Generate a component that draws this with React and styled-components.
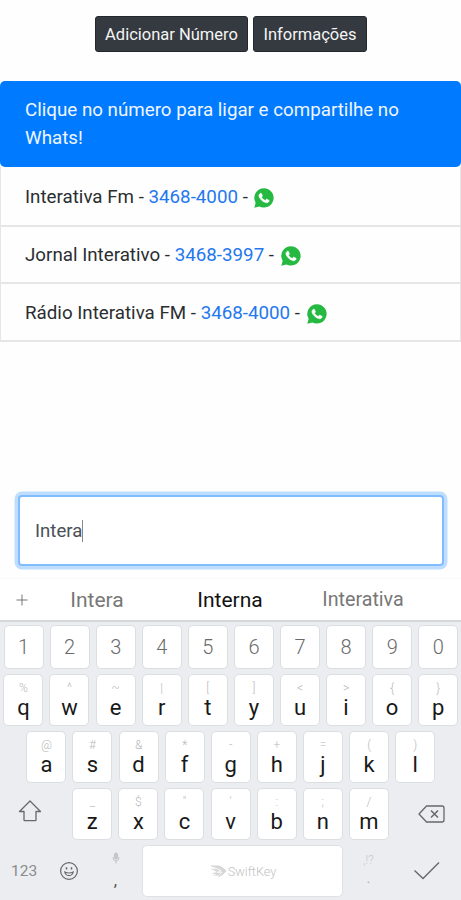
import React from "react";
import styled, { createGlobalStyle } from "styled-components";

const GlobalStyle = createGlobalStyle`
  * {
    box-sizing: border-box;
  }
  body {
    margin: 0;
    background: #ffffff;
    font-family: Roboto, "Liberation Sans", sans-serif;
  }
`;

const Screen = styled.div`
  width: 461px;
  height: 900px;
  display: flex;
  flex-direction: column;
  overflow: hidden;
  background: #fefefe;
`;

const Toolbar = styled.div`
  display: flex;
  justify-content: center;
  gap: 5px;
  height: 81px;
  padding-top: 16px;
`;

const DarkButton = styled.button`
  width: ${(props) => props.$width}px;
  height: 36px;
  padding: 0 0 0 1px;
  border: 1px solid #23282e;
  border-radius: 3px;
  background: #343a40;
  color: #f4f4f4;
  font-family: inherit;
  font-size: 16.5px;
  white-space: nowrap;
`;

const ListHeader = styled.div`
  height: 86px;
  padding: 15px 25px;
  border-radius: 5px;
  background: #007bff;
  color: #f0f5ff;
  font-size: 18.75px;
  line-height: 28px;
`;

const ContactList = styled.ul`
  height: 328px;
  margin: 0;
  padding: 0;
  list-style: none;
`;

const Contact = styled.li`
  display: flex;
  align-items: center;
  height: ${(props) => props.$height}px;
  padding: 1px 0 0 24px;
  border: solid #e6e6e6;
  border-width: 0 1px 2px;
  color: #2b2e31;
  font-size: 18.75px;
  white-space: pre;
`;

const Phone = styled.a`
  color: #2478ee;
`;

const SearchBox = styled.div`
  display: flex;
  align-items: center;
  flex-shrink: 0;
  height: 71px;
  margin: 0 17px 0 18px;
  padding-left: 15px;
  border: 2px solid #80bdff;
  border-radius: 4px;
  box-shadow: 0 0 0 3.5px #bfdeff;
  background: #ffffff;
  color: #495057;
  font-size: 18.6px;
`;

const Caret = styled.span`
  width: 1px;
  height: 22px;
  background: #888888;
`;

const Suggestions = styled.div`
  display: grid;
  grid-template-columns: 31px 132px 134px 132px 32px;
  align-items: center;
  flex-shrink: 0;
  height: 44px;
  margin-top: 12px;
  border-top: 1px solid #f8f8f8;
  border-bottom: 2px solid #d6d8da;
  background: #ffffff;
`;

const Suggestion = styled.span`
  text-align: center;
  color: ${(props) => (props.$active ? "#111111" : "#777777")};
  font-size: ${(props) => props.$size}px;
`;

const PlusIcon = styled.svg`
  margin-left: 16px;
`;

const Keyboard = styled.div`
  flex: 1;
  display: flex;
  flex-direction: column;
  gap: 5px;
  padding-top: 3px;
  background: #ebedf0;
`;

const KeyRow = styled.div`
  display: flex;
  gap: 6.1px;
  height: ${(props) => props.$height || 52}px;
  padding-left: ${(props) => props.$indent}px;
`;

const KeyCap = styled.div`
  display: flex;
  flex-direction: column;
  align-items: center;
  justify-content: ${(props) => (props.$plain ? "center" : "flex-start")};
  width: 40px;
  border: 1px solid #dcdfe2;
  border-radius: 5px;
  background: #ffffff;
  color: ${(props) => (props.$plain ? "#6a6a6a" : "#191919")};
  font-size: ${(props) => (props.$plain ? 20 : 22)}px;
  font-weight: ${(props) => (props.$plain ? 300 : 400)};
`;

const Hint = styled.span`
  height: 20px;
  padding-top: 6px;
  color: ${(props) => (props.$faded ? "#c8c8c8" : "#b8b8b8")};
  font-size: 12px;
  font-weight: 300;
  line-height: 14px;
`;

const Letter = styled.span`
  line-height: 26px;
`;

const ShiftKey = styled.div`
  width: 62.8px;
  padding: 12px 0 0 15px;
`;

const DeleteKey = styled.div`
  padding: 16px 0 0 23px;
`;

const BottomRow = styled.div`
  display: grid;
  grid-template-columns: 47px 44px 51px 201px 51px 65px;
  height: 52px;
`;

const ModeKey = styled.div`
  display: flex;
  align-items: center;
  padding-left: 11px;
  color: #8a8c8e;
  font-size: 15.5px;
`;

const IconKey = styled.div`
  display: flex;
  align-items: center;
  justify-content: center;
`;

const PunctuationKey = styled.div`
  display: flex;
  flex-direction: column;
  align-items: center;
  justify-content: space-between;
  padding: ${(props) => (props.$faded ? "2px 0 10px" : "7px 2px 8px 0")};
  color: ${(props) => (props.$faded ? "#b0b0b0" : "#555555")};
  font-size: ${(props) => (props.$faded ? 15 : 17)}px;
  line-height: 17px;
`;

const SpaceKey = styled.div`
  display: flex;
  align-items: center;
  justify-content: center;
  gap: 1px;
  border: 1px solid #dfe1e4;
  border-radius: 5px;
  background: #ffffff;
  color: #c2c2c2;
  font-size: 12.7px;
  font-weight: 300;
`;

const contacts = [
  { name: "Interativa Fm", phone: "3468-4000", height: 60 },
  { name: "Jornal Interativo", phone: "3468-3997", height: 57 },
  { name: "Rádio Interativa FM", phone: "3468-4000", height: 58 },
];

const topKeys = [
  ["q", "%"], ["w", "^"], ["e", "~"], ["r", "|"], ["t", "["],
  ["y", "]"], ["u", "<"], ["i", ">"], ["o", "{"], ["p", "}"],
];
const homeKeys = [
  ["a", "@"], ["s", "#"], ["d", "&"], ["f", "*"], ["g", "-"],
  ["h", "+"], ["j", "="], ["k", "("], ["l", ")"],
];
const lowerKeys = [
  ["z", "_"], ["x", "$"], ["c", '"'], ["v", "'"], ["b", ":"],
  ["n", ";"], ["m", "/"],
];

const WhatsSvg = styled.svg`
  margin: 2px 0 0 2px;
`;

function WhatsIcon() {
  return (
    <WhatsSvg width="20" height="20" viewBox="0 0 24 24">
      <path d="M12 .3A11.6 11.6 0 0 0 2 17.8L.4 23.6l6-1.5A11.6 11.6 0 1 0 12 .3z" fill="#25b941" />
      <path
        d="M17.472 14.382c-.297-.149-1.758-.867-2.03-.967-.273-.099-.471-.148-.67.15-.197.297-.767.966-.94 1.164-.173.199-.347.223-.644.075-.297-.15-1.255-.463-2.39-1.475-.883-.788-1.48-1.761-1.653-2.059-.173-.297-.018-.458.13-.606.134-.133.298-.347.446-.52.149-.174.198-.298.298-.497.099-.198.05-.371-.025-.52-.075-.149-.669-1.612-.916-2.207-.242-.579-.487-.5-.669-.51-.173-.008-.371-.01-.57-.01-.198 0-.52.074-.792.372-.272.297-1.04 1.016-1.04 2.479 0 1.462 1.065 2.875 1.213 3.074.149.198 2.096 3.2 5.077 4.487.709.306 1.262.489 1.694.625.712.227 1.36.195 1.871.118.571-.085 1.758-.719 2.006-1.413.248-.694.248-1.289.173-1.413-.074-.124-.272-.198-.57-.347z"
        fill="#ffffff"
        stroke="#ffffff"
        strokeWidth="0.8"
      />
    </WhatsSvg>
  );
}

function Keys({ keys }) {
  return keys.map(([letter, hint]) => (
    <KeyCap key={letter}>
      <Hint>{hint}</Hint>
      <Letter>{letter}</Letter>
    </KeyCap>
  ));
}

function App() {
  return (
    <Screen>
      <GlobalStyle />
      <Toolbar>
        <DarkButton $width={153}>Adicionar Número</DarkButton>
        <DarkButton $width={114}>Informações</DarkButton>
      </Toolbar>
      <ListHeader>
        Clique no número para ligar e compartilhe no Whats!
      </ListHeader>
      <ContactList>
        {contacts.map((contact) => (
          <Contact key={contact.name} $height={contact.height}>
            {contact.name} - <Phone>{contact.phone}</Phone> - <WhatsIcon />
          </Contact>
        ))}
      </ContactList>
      <SearchBox>
        Intera
        <Caret />
      </SearchBox>
      <Suggestions>
        <PlusIcon width="12" height="12" viewBox="0 0 12 12" stroke="#777777">
          <path d="M6 .5v11M.5 6h11" />
        </PlusIcon>
        <Suggestion $size={21}>Intera</Suggestion>
        <Suggestion $size={21} $active>Interna</Suggestion>
        <Suggestion $size={19.7}>Interativa</Suggestion>
      </Suggestions>
      <Keyboard>
        <KeyRow $indent={3.5} $height={44}>
          {"1234567890".split("").map((digit) => (
            <KeyCap key={digit} $plain>{digit}</KeyCap>
          ))}
        </KeyRow>
        <KeyRow $indent={3.4}>
          <Keys keys={topKeys} />
        </KeyRow>
        <KeyRow $indent={26.4}>
          <Keys keys={homeKeys} />
        </KeyRow>
        <KeyRow $indent={3.4}>
          <ShiftKey>
            <svg width="24" height="22" viewBox="0 0 24 22" fill="none" stroke="#66686a" strokeWidth="1.3">
              <path d="M12 1 22.5 11.5H18V20q0 .7-.7.7H6.7Q6 20.7 6 20V11.5H1.5z" strokeLinejoin="round" />
            </svg>
          </ShiftKey>
          <Keys keys={lowerKeys} />
          <DeleteKey>
            <svg width="28" height="20" viewBox="0 0 28 20" fill="none" stroke="#66686a" strokeWidth="1.3">
              <path d="M8.5 2H24q2 0 2 2V16q0 2-2 2H8.500L1 10z" strokeLinejoin="round" />
              <path d="m13 6.500 7 7m0-7-7 7" strokeWidth="1.5" />
            </svg>
          </DeleteKey>
        </KeyRow>
        <BottomRow>
          <ModeKey>123</ModeKey>
          <IconKey>
            <svg width="20" height="20" viewBox="0 0 20 20" fill="none" stroke="#66686a" strokeWidth="1.2">
              <circle cx="10" cy="10" r="8.4" />
              <path d="M5.8 11q.7 3.600 4.200 3.600t4.200-3.600q-4.200 2-8.400 0z" />
              <path d="M7.500 6.300v2.200M12.500 6.300v2.200" strokeWidth="1.5" />
            </svg>
          </IconKey>
          <PunctuationKey>
            <svg width="8" height="12" viewBox="0 0 8 12" fill="none" stroke="#c0c2c4">
              <rect x="2.5" y="1" width="3" height="6" rx="1.5" fill="#c4c6c8" />
              <path d="M1 5q0 4 3 4t3-4M4 9v2.500" />
            </svg>
            <span>,</span>
          </PunctuationKey>
          <SpaceKey>
            <svg width="18" height="14" viewBox="0 0 18 14" fill="#d6d6d6">
              <path d="M1 1.500h8.500Q14 2.500 17.500 7 13 12.500 8.500 13l2-1.500H3L8 10 2 9.500 8 8 1 4.500l6 1z" />
              <path d="m4 3 8 3.500-4 2 5-.5-3 3" fill="none" stroke="#ffffff" strokeWidth=".8" />
            </svg>
            SwiftKey
          </SpaceKey>
          <PunctuationKey $faded>
            <Hint $faded>,!?</Hint>
            <span>.</span>
          </PunctuationKey>
          <IconKey>
            <svg width="28" height="20" viewBox="0 0 28 20" fill="none" stroke="#66686a" strokeWidth="1.4">
              <path d="m1.500 9.500 8.500 8L26 1.500" />
            </svg>
          </IconKey>
        </BottomRow>
      </Keyboard>
    </Screen>
  );
}

export default App;
